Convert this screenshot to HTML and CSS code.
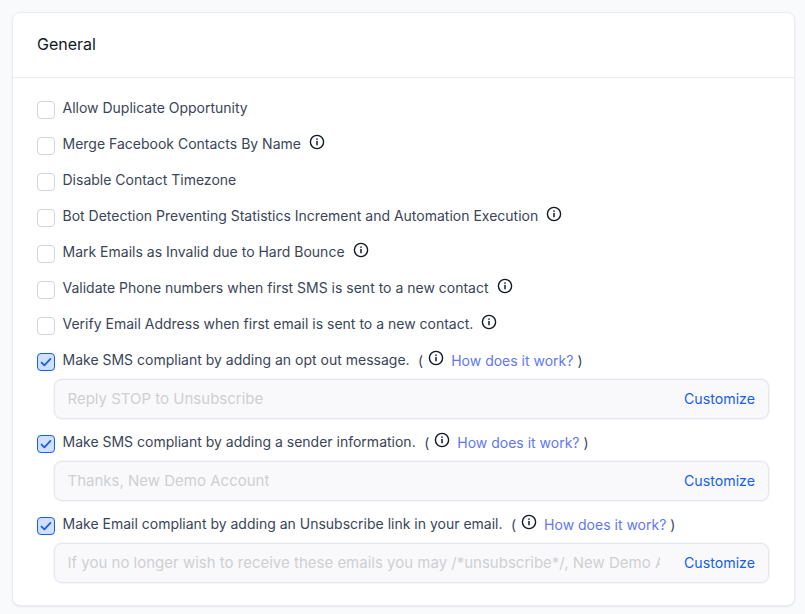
FILE: index.html
```html
<!DOCTYPE html>
<html lang="en">
<head>
<meta charset="utf-8">
<title>General</title>
<link rel="stylesheet" href="styles.css">
</head>
<body>
<svg class="defs" width="0" height="0" aria-hidden="true">
  <symbol id="info" viewBox="0 0 16 16"><circle cx="8" cy="8" r="6.6" fill="none" stroke="currentColor" stroke-width="1.4"/><path d="M8 7.4v3.4" fill="none" stroke="currentColor" stroke-width="1.5" stroke-linecap="round"/><circle cx="8" cy="5.1" r=".85" fill="currentColor"/></symbol>
  <symbol id="check" viewBox="0 0 18 18"><path d="M4 9.6l3.2 3.1L14 5.6" fill="none" stroke="currentColor" stroke-width="2" stroke-linecap="round" stroke-linejoin="round"/></symbol>
</svg>
<section class="card">
  <h2 class="card-title">General</h2>
  <div class="card-body">
    <div class="row"><span class="box"></span><span class="label">Allow Duplicate Opportunity</span></div>
    <div class="row"><span class="box"></span><span class="label">Merge Facebook Contacts By Name</span><svg class="info"><use href="#info"/></svg></div>
    <div class="row"><span class="box"></span><span class="label">Disable Contact Timezone</span></div>
    <div class="row"><span class="box"></span><span class="label">Bot Detection Preventing Statistics Increment and Automation Execution</span><svg class="info"><use href="#info"/></svg></div>
    <div class="row"><span class="box"></span><span class="label">Mark Emails as Invalid due to Hard Bounce</span><svg class="info"><use href="#info"/></svg></div>
    <div class="row"><span class="box"></span><span class="label">Validate Phone numbers when first SMS is sent to a new contact</span><svg class="info"><use href="#info"/></svg></div>
    <div class="row"><span class="box"></span><span class="label">Verify Email Address when first email is sent to a new contact.</span><svg class="info"><use href="#info"/></svg></div>

    <div class="row"><span class="box on"><svg><use href="#check"/></svg></span><span class="label">Make SMS compliant by adding an opt out message.</span><span class="paren">(</span><svg class="info tight"><use href="#info"/></svg><a class="how">How does it work?</a><span class="paren end">)</span></div>
    <div class="field"><span class="ph">Reply STOP to Unsubscribe</span><a class="customize">Customize</a></div>

    <div class="row"><span class="box on"><svg><use href="#check"/></svg></span><span class="label">Make SMS compliant by adding a sender information.</span><span class="paren">(</span><svg class="info tight"><use href="#info"/></svg><a class="how">How does it work?</a><span class="paren end">)</span></div>
    <div class="field"><span class="ph">Thanks, New Demo Account</span><a class="customize">Customize</a></div>

    <div class="row"><span class="box on"><svg><use href="#check"/></svg></span><span class="label">Make Email compliant by adding an Unsubscribe link in your email.</span><span class="paren">(</span><svg class="info tight"><use href="#info"/></svg><a class="how">How does it work?</a><span class="paren end">)</span></div>
    <div class="field"><span class="ph">If you no longer wish to receive these emails you may /*unsubscribe*/, New Demo Account</span><a class="customize">Customize</a></div>
  </div>
</section>
</body>
</html>
```

FILE: styles.css
```css
* { box-sizing: border-box; }
html, body { height: 100%; }
body {
  margin: 0;
  padding: 12px 10px 0 12px;
  background: #f9fafb;
  font-family: Inter, "Liberation Sans", sans-serif;
  font-size: 14px;
  color: #3a4558;
  overflow: hidden;
}
.defs { position: absolute; }
.card {
  height: 594px;
  background: #fff;
  border: 1px solid #eaecf0;
  border-radius: 8px;
  box-shadow: 0 1px 2px rgba(16, 24, 40, .08);
}
.card-title {
  margin: 0;
  height: 65px;
  padding: 0 24px 2px;
  display: flex;
  align-items: center;
  font-size: 16px;
  font-weight: 400;
  color: #101828;
  border-bottom: 1px solid #eaecf0;
}
.card-body { padding: 12px 25px 0 24px; }
.row {
  height: 36px;
  display: flex;
  align-items: center;
}
.box {
  flex: none;
  width: 18px;
  height: 18px;
  margin: 3px 7.5px 0 0;
  border: 1px solid #d0d5dd;
  border-radius: 4px;
  background: #fff;
}
.box.on {
  border-color: #155eef;
  background: #d1e0ff;
  color: #155eef;
}
.box svg { display: block; width: 16px; height: 16px; }
.label { white-space: nowrap; line-height: 20px; }
.info {
  flex: none;
  width: 16px;
  height: 16px;
  margin: -5px 0 0 8px;
  color: #101828;
}
.info.tight { margin: -5px 0 0 5px; }
.paren { margin-left: 8.5px; white-space: pre; }
.paren.end { margin-left: 4px; }
.how { margin-left: 7px; color: #6078f5; white-space: nowrap; }
.field {
  height: 40px;
  margin: 1px 0 5px 17px;
  padding: 0 13px 2px 12.5px;
  display: flex;
  align-items: center;
  gap: 24px;
  background: #f9f9fb;
  border: 1px solid #e4e7ec;
  border-radius: 8px;
  box-shadow: 0 0 0 1px #f5f6f8;
}
.ph {
  flex: 1;
  min-width: 0;
  overflow: hidden;
  white-space: nowrap;
  font-size: 15px;
  color: #cfcfd2;
}
.customize { flex: none; color: #155eef; font-size: 14.2px; }
```
